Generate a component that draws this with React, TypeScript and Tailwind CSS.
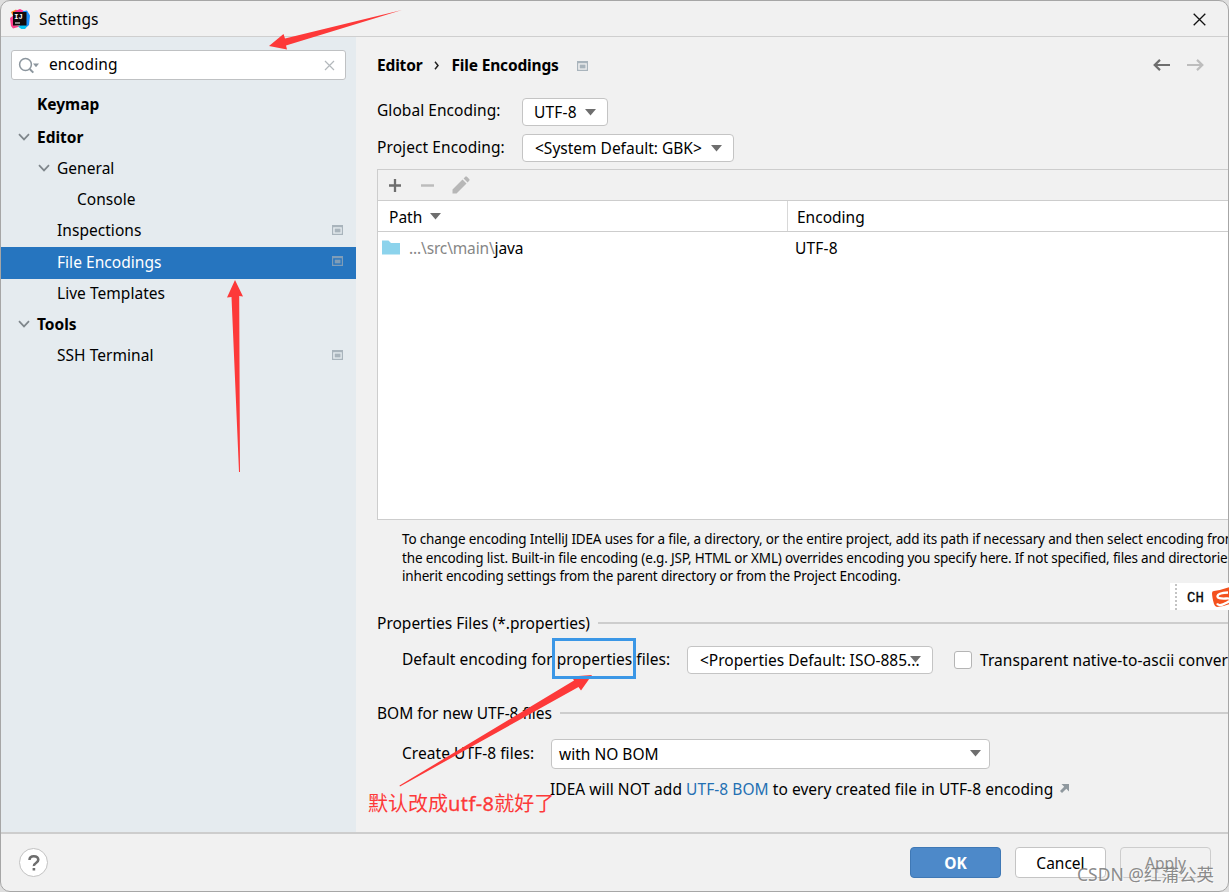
import { useState } from 'react';
import type { ReactNode } from 'react';

type TreeItem = {
  id: string;
  label: string;
  indent: string;
  bold?: boolean;
  expanded?: boolean;
  projectLevel?: boolean;
};

const treeItems: TreeItem[] = [
  { id: 'keymap', label: 'Keymap', indent: 'pl-[36px]', bold: true },
  { id: 'editor', label: 'Editor', indent: 'pl-[17px]', bold: true, expanded: true },
  { id: 'general', label: 'General', indent: 'pl-[37px]', expanded: true },
  { id: 'console', label: 'Console', indent: 'pl-[76px]' },
  { id: 'inspections', label: 'Inspections', indent: 'pl-[56px]', projectLevel: true },
  { id: 'file-encodings', label: 'File Encodings', indent: 'pl-[56px]', projectLevel: true },
  { id: 'live-templates', label: 'Live Templates', indent: 'pl-[56px]' },
  { id: 'tools', label: 'Tools', indent: 'pl-[17px]', bold: true, expanded: true },
  { id: 'ssh', label: 'SSH Terminal', indent: 'pl-[56px]', projectLevel: true },
];

function ProjectIcon({ className = '' }: { className?: string }) {
  return (
    <svg width="11" height="10" viewBox="0 0 11 10" className={className}>
      <path fillRule="evenodd" fill="currentColor" d="M0 0h11v10H0zM1.200 2.200v6.600h8.600V2.200z" />
      <rect x="2.700" y="3.600" width="5.800" height="3.800" fill="currentColor" />
    </svg>
  );
}

function Chevron() {
  return (
    <svg width="12" height="8" viewBox="0 0 12 8" fill="none" stroke="#7f868b" strokeWidth="1.700">
      <path d="M1 1.200 6 6.400 11 1.200" />
    </svg>
  );
}

function Triangle({ className = '' }: { className?: string }) {
  return (
    <svg width="11" height="7" viewBox="0 0 11 7" className={`shrink-0 ${className}`}>
      <path d="M0 0h11L5.500 6.500z" fill="#6e6e6e" />
    </svg>
  );
}

function Combo({ children, className = '' }: { children: ReactNode; className?: string }) {
  return (
    <button className={`flex shrink-0 items-center rounded-[4px] border border-[#c4c4c4] bg-white text-left whitespace-nowrap ${className}`}>
      {children}
    </button>
  );
}

function IdeaLogo() {
  return (
    <svg width="20" height="20" viewBox="0 0 20 20">
      <path d="M1 3 6 .5 10 4 5 11z" fill="#fc801d" />
      <path d="M5 2 10 0l5 2.500-2 6-8 1z" fill="#fe2d8b" />
      <path d="M13.500 2 17 1.500l3 5L19 16l-4 3.500-5-2V5z" fill="#1a8dfb" />
      <path d="M0 9 4 6v10l6 1.500-7 2L1 17z" fill="#fe3f8c" />
      <path d="m8 17.500 6-1.500 3 1-2 3-3 .500z" fill="#07c3f2" />
      <rect x="3" y="3" width="13.500" height="13.500" fill="#120a0c" />
      <text x="4.300" y="9.600" fontSize="7" fontWeight="700" fontFamily="Liberation Mono, monospace" fill="#fff">IJ</text>
      <path d="M5 14h5" stroke="#fff" strokeWidth="1.200" />
    </svg>
  );
}

function TitleBar() {
  return (
    <header className="flex h-[36px] shrink-0 items-center border-b border-[#cfcfcf] pt-px pr-[22px] pl-[9px]">
      <IdeaLogo />
      <span className="ml-[9px] tracking-[0.07px]">Settings</span>
      <svg className="ml-auto" width="13" height="13" viewBox="0 0 13 13" stroke="#111" strokeWidth="1.300">
        <path d="m.7.7 11.600 11.600M12.300.7.7 12.300" />
      </svg>
    </header>
  );
}

function Sidebar() {
  const [selected, setSelected] = useState('file-encodings');

  return (
    <aside className="w-[355px] shrink-0 bg-[#e5ebef] pt-[13px]">
      <div className="ml-[10px] flex h-[30px] w-[335px] items-center rounded-[3px] border border-[#bfc1c3] bg-white pr-[10px] pl-[6px]">
        <svg width="22" height="17" viewBox="0 0 22 17" fill="none" stroke="#8c969e" strokeWidth="1.500">
          <circle cx="7.500" cy="7.500" r="5.900" />
          <path d="m11.700 12 3.600 3.600" strokeWidth="2" />
          <path d="M15 6.500h6l-3 3.800z" fill="#8c969e" stroke="none" />
        </svg>
        <span className="ml-[9px] pb-[2px] tracking-[0.1px]">encoding</span>
        <svg className="ml-auto" width="11" height="11" viewBox="0 0 11 11" stroke="#b3b8bc" strokeWidth="1.200">
          <path d="m1 1 9 9M10 1l-9 9" />
        </svg>
      </div>
      <ul className="pt-[10px]">
        {treeItems.map(item => (
          <li
            key={item.id}
            onClick={() => setSelected(item.id)}
            className={`flex items-center pr-[13px] ${item.indent} ${item.bold ? 'font-bold' : 'tracking-[0.04px]'} ${item.id === 'keymap' ? 'h-[33px] pb-[2px]' : item.id === selected ? 'h-[32px]' : 'h-[31px]'} ${item.id === selected ? 'bg-[#2675bf] text-white' : ''}`}
          >
            {item.expanded && <span className="mr-[7px] pb-[3px]"><Chevron /></span>}
            <span className="pb-[3px]">{item.label}</span>
            {item.projectLevel && (
              <ProjectIcon className={`ml-auto ${item.id === selected ? 'mb-[4px] text-[#7f9db8]' : 'mb-[3px] text-[#a9b4bc]'}`} />
            )}
          </li>
        ))}
      </ul>
    </aside>
  );
}

function EncodingTable() {
  return (
    <div className="mt-[7px] flex h-[351px] flex-col border-y border-l border-[#cdcdcd] bg-white">
      <div className="flex h-[31px] shrink-0 items-center border-b border-[#cdcdcd] bg-[#f1f1f1] pl-[11px]">
        <svg width="12" height="13" viewBox="0 0 12 13" stroke="#6e6e6e" strokeWidth="2.300">
          <path d="M6 0v13M0 6.500h12" />
        </svg>
        <svg className="ml-[20px]" width="13" height="13" viewBox="0 0 13 13" stroke="#bcbcbc" strokeWidth="2.300">
          <path d="M0 6.500h13" />
        </svg>
        <svg className="ml-[18px]" width="18" height="18" viewBox="0 0 18 18" fill="#b7b7b7">
          <path d="M.5 17.500v-4L10.500 3.500l4 4L4.500 17.500zM11.600 2.400 13.500.6q.6-.4 1.200 0l2.700 2.700q.4.600 0 1.200l-1.800 1.900z" />
        </svg>
      </div>
      <div className="flex h-[31px] shrink-0 border-b border-[#cdcdcd]">
        <div className="flex w-[410px] items-center border-r border-[#d8d8d8] pt-px pl-[11px]">
          <span>Path</span>
          <Triangle className="mb-px ml-[8px]" />
        </div>
        <div className="flex items-center pt-px pl-[9px]">Encoding</div>
      </div>
      <div className="flex h-[32px] items-center">
        <div className="flex w-[417px] items-center pl-[4px]">
          <svg className="mb-[2px]" width="18" height="15" viewBox="0 0 18 15">
            <path d="M0 .5h6.500L9 3h9v11.500H0z" fill="#8cd3ec" />
          </svg>
          <span className="ml-[9px] tracking-[-0.150px] text-[#868686]">...\src\main\<span className="text-black">java</span></span>
        </div>
        <span className="tracking-[0.200px]">UTF-8</span>
      </div>
    </div>
  );
}

function SectionTitle({ title, className = '' }: { title: string; className?: string }) {
  return (
    <div className={`flex h-[24px] items-center ${className}`}>
      <h2 className="whitespace-nowrap">{title}</h2>
      <div className="ml-[8px] h-[2px] flex-1 bg-[#cdcdcd]" />
    </div>
  );
}

function EncodingsPage() {
  return (
    <main className="min-w-0 flex-1 overflow-hidden pl-[21px] whitespace-nowrap">
      <div className="flex h-[56px] items-center pr-[24px] font-bold tracking-[-0.170px]">
        <span>Editor</span>
        <svg className="mx-[12px]" width="5" height="9" viewBox="0 0 5 9" fill="none" stroke="#222" strokeWidth="1.500">
          <path d="m1 .8 3 3.700-3 3.700" />
        </svg>
        <span>File Encodings</span>
        <ProjectIcon className="mt-px ml-[18px] text-[#a9b4bc]" />
        <svg className="ml-auto" width="17" height="12" viewBox="0 0 17 12" fill="none" stroke="#6e6e6e" strokeWidth="2.200">
          <path d="M1.700 6H17M7 .9 1.700 6 7 11.100" />
        </svg>
        <svg className="ml-[17px]" width="17" height="12" viewBox="0 0 17 12" fill="none" stroke="#bdbdbd" strokeWidth="2.200">
          <path d="M15.300 6H0M10 .9 15.300 6 10 11.100" />
        </svg>
      </div>

      <div className="mt-[5px] flex h-[28px] items-center">
        <label className="w-[145px] pb-[4px] tracking-[0.050px]">Global Encoding:</label>
        <Combo className="h-[28px] w-[86px] pl-[11px]">
          <span className="tracking-[0.200px]">UTF-8</span>
          <Triangle className="ml-[8px]" />
        </Combo>
      </div>
      <div className="mt-[8px] flex h-[28px] items-center">
        <label className="w-[145px] pb-[2px] tracking-[0.080px]">Project Encoding:</label>
        <Combo className="h-[28px] w-[212px] pl-[12px]">
          <span>&lt;System Default: GBK&gt;</span>
          <Triangle className="ml-[9px]" />
        </Combo>
      </div>

      <EncodingTable />

      <div className="mt-[10px] pl-[25px] text-[13.500px] leading-[18.600px] tracking-[-0.165px]">
        <p>To change encoding IntelliJ IDEA uses for a file, a directory, or the entire project, add its path if necessary and then select encoding from</p>
        <p>the encoding list. Built-in file encoding (e.g. JSP, HTML or XML) overrides encoding you specify here. If not specified, files and directories</p>
        <p>inherit encoding settings from the parent directory or from the Project Encoding.</p>
      </div>

      <SectionTitle title="Properties Files (*.properties)" className="mt-[25px]" />
      <div className="mt-[11px] flex h-[28px] items-center pl-[25px]">
        <label className="w-[285px] shrink-0 pb-px tracking-[0.020px]">Default encoding for properties files:</label>
        <Combo className="h-[28px] w-[246px] pl-[12px]">
          <span>&lt;Properties Default: ISO-885...</span>
          <Triangle className="-ml-[10px]" />
        </Combo>
        <span className="ml-[21px] h-[18px] w-[18px] shrink-0 rounded-[3px] border border-[#b5b5b5] bg-white" />
        <span className="ml-[8px] tracking-[0.050px]">Transparent native-to-ascii conversion</span>
      </div>

      <SectionTitle title="BOM for new UTF-8 files" className="mt-[27px]" />
      <div className="mt-[14px] flex h-[30px] items-center pl-[25px]">
        <label className="w-[149px] shrink-0 pb-px tracking-[0.050px]">Create UTF-8 files:</label>
        <Combo className="h-[30px] w-[439px] justify-between pr-[8px] pl-[7px]">
          <span>with NO BOM</span>
          <Triangle />
        </Combo>
      </div>
      <p className="mt-[8px] flex h-[24px] items-center pl-[173px]">
        <span className="tracking-[0.050px]">IDEA will NOT add <a className="text-[#2470b3]">UTF-8 BOM</a> to every created file in UTF-8 encoding</span>
        <svg className="ml-[7px]" width="9" height="9" viewBox="0 0 9 9" fill="#8f989e">
          <path d="M1.500 0H9v7.500L6.300 4.800 2 9 0 7l4.200-4.300z" />
        </svg>
      </p>
    </main>
  );
}

function Footer() {
  return (
    <footer className="flex flex-1 items-center border-t-2 border-[#cdcdcd] pr-[17px] pl-[18px]">
      <button className="flex h-[29px] w-[29px] items-center justify-center rounded-full border border-[#c2c2c2] bg-white">
        <svg width="12" height="16" viewBox="0 0 12 16" fill="none" stroke="#6e6e6e" strokeWidth="2.600">
          <path d="M1.500 5Q1.500 1.300 5.800 1.300T10.300 4.800Q10.300 6.500 8 8T5.900 11" />
          <path d="M5.900 13v2.600" />
        </svg>
      </button>
      <button className="ml-auto h-[31px] w-[91px] rounded-[4px] border border-[#3f78b5] bg-[#4d89c9] font-bold text-white">OK</button>
      <button className="ml-[14px] h-[31px] w-[91px] rounded-[4px] border border-[#c4c4c4] bg-white">Cancel</button>
      <button className="ml-[14px] h-[31px] w-[91px] rounded-[4px] border border-[#cdcdcd] text-[#8c8c8c]">Apply</button>
    </footer>
  );
}

// Red arrows, highlight box and note drawn on top of the dialog
function Annotations() {
  return (
    <>
      <svg className="pointer-events-none absolute inset-0" width="1229" height="892" viewBox="0 0 1229 892" fill="#fd3939">
        <path d="M269 46 283.500 34l1.500 4.500L402 10 286 45.500l1 4z" />
        <path d="M235 280 243 296.500 239.200 296 240 472H239L231.500 297 227 297.500z" />
        <path d="M592 675 581 690.500 578.500 687 400 786.500 399.500 785.500 574 680.500 571.500 676.500z" />
        <rect x="553.500" y="639.500" width="81" height="38" fill="none" stroke="#3b97e6" strokeWidth="3" />
      </svg>
      <span className="absolute top-[790px] left-[368px] text-[20px] leading-[28px] whitespace-nowrap text-[#fd3939]">
        默认改成<span className="tracking-[0.400px] [-webkit-text-stroke:0.300px_#fd3939]">utf-8</span>就好了
      </span>
      <span className="absolute top-[862px] left-[1077px] text-[17.500px] leading-[24px] whitespace-nowrap text-[#7d7d7d]/90 [text-shadow:1px_1px_0_#ffffffaa]">CSDN @红蒲公英</span>
    </>
  );
}

function InputMethodBar() {
  return (
    <div className="absolute top-[583px] right-0 flex h-[27px] w-[59px] items-center overflow-hidden bg-white pl-[5px]">
      <div className="h-[26px] border-l-2 border-dotted border-[#c4c4c4]" />
      <span className="ml-[10px] pt-[2px] font-['Liberation_Mono',monospace] text-[14px] font-normal [-webkit-text-stroke:0.300px_#222]">CH</span>
      <svg className="ml-[8px] shrink-0" width="20" height="20" viewBox="0 0 20 20">
        <path d="M2 4Q10 3 18 0q2 0 2 3v13q-6 3-15 4-2 0-3-3Q0 10 0 6q0-2 2-2z" fill="#f4511e" />
        <path d="M16 5.500Q6 6 5.500 9t8.500 2.500 1 4-10 1" fill="none" stroke="#fff" strokeWidth="2.300" />
      </svg>
    </div>
  );
}

export default function App() {
  return (
    <div className="relative h-[892px] w-[1229px] overflow-hidden bg-[#dedede] font-['Noto_Sans','Noto_Sans_CJK_SC',sans-serif] text-[15.500px] leading-[22px] text-black">
      <div className="flex h-[892px] w-[1229px] flex-col overflow-hidden rounded-[10px] border border-[#a6a6a6] bg-[#f1f1f1]">
        <TitleBar />
        <div className="flex h-[795px] shrink-0">
          <Sidebar />
          <EncodingsPage />
        </div>
        <Footer />
      </div>
      <InputMethodBar />
      <Annotations />
    </div>
  );
}
